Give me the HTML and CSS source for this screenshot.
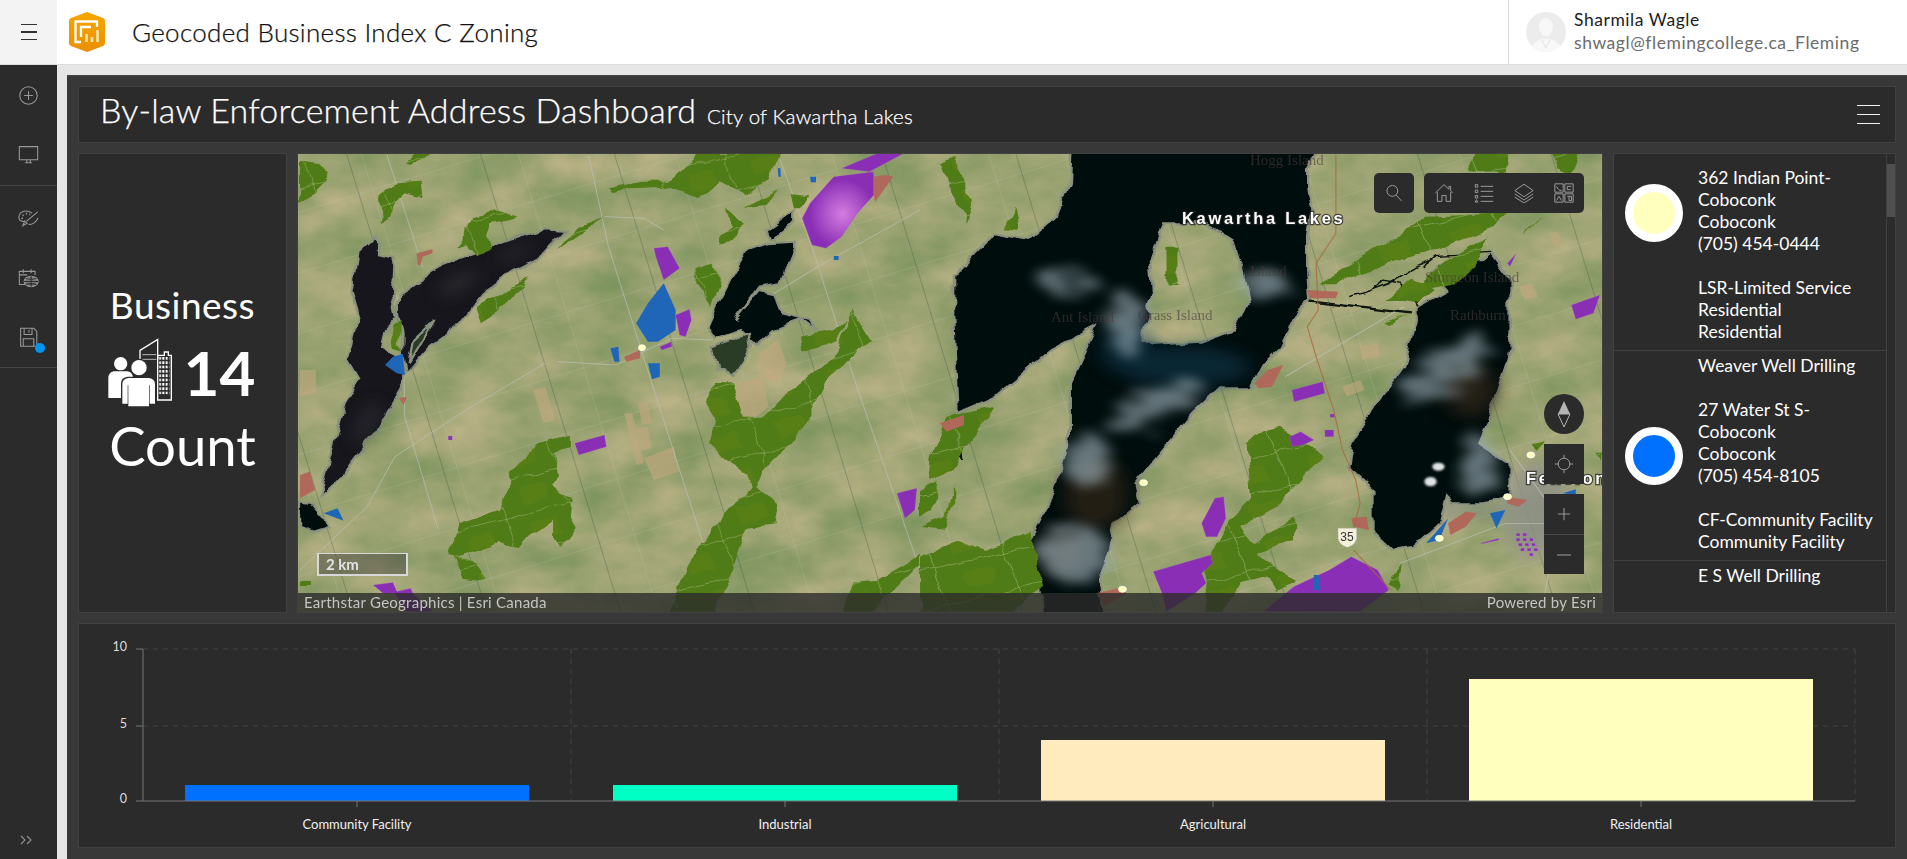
FILE: index.html
```html
<!DOCTYPE html>
<html lang="en">
<head>
<meta charset="utf-8">
<title>Geocoded Business Index C Zoning</title>
<link rel="stylesheet" href="styles.css">
</head>
<body>
<header class="topbar">
  <button class="menu-btn" aria-label="Menu"><span></span><span></span><span></span></button>
  <svg class="logo" viewBox="0 0 36 40">
    <defs><linearGradient id="lg" x1="0" y1="0" x2="0" y2="1"><stop offset="0" stop-color="#f7a600"/><stop offset="1" stop-color="#ea8f00"/></linearGradient></defs>
    <path d="M18 0 L34 6 Q36 7 36 9 V31 Q36 33 34 34 L18 40 L2 34 Q0 33 0 31 V9 Q0 7 2 6 Z" fill="url(#lg)"/>
    <path d="M12 30 H6.500 V9.500 H28 V15" fill="none" stroke="#fff" stroke-width="2.300"/>
    <path d="M12 25 V15 H22" fill="none" stroke="#fff" stroke-width="2.300"/>
    <path d="M17.500 22 v8 M23 25 v5 M28.500 18 v12" fill="none" stroke="#ffe3ad" stroke-width="2.600"/>
  </svg>
  <h1 class="app-title">Geocoded Business Index C Zoning</h1>
  <div class="user">
    <svg class="avatar" viewBox="0 0 40 40">
      <defs><clipPath id="av"><ellipse cx="20" cy="20" rx="20" ry="20"/></clipPath></defs>
      <g clip-path="url(#av)"><rect width="40" height="40" fill="#ececec"/>
      <ellipse cx="20" cy="15" rx="7" ry="9" fill="#f8f8f8"/><path d="M4 40 Q5 30 16 27 H24 Q35 30 36 40 Z" fill="#f8f8f8"/><path d="M16 28 L20 36 L24 28" fill="none" stroke="#e2e2e2"/></g>
    </svg>
    <div class="user-text">
      <div class="user-name">Sharmila Wagle</div>
      <div class="user-mail">shwagl@flemingcollege.ca_Fleming</div>
    </div>
  </div>
</header>

<div class="shell">
  <nav class="sidebar">
    <div class="side-group">
      <svg class="side-icon" viewBox="0 0 24 24"><circle cx="12" cy="12" r="10"/><path d="M12 7v10M7 12h10"/></svg>
      <svg class="side-icon" viewBox="0 0 24 24"><path d="M1.500 3h21v15h-21zM8 21.500h8M10 18v3.500M14 18v3.500"/></svg>
    </div>
    <div class="side-group">
      <svg class="side-icon" viewBox="0 0 24 24"><path d="M16 7C14 5.500 11.500 4.500 9 4.500 4.500 4.500 1 7.500 1 11.500 1 14.500 3 16.500 6 16.500 7 16.500 8 16 8.500 15.500"/><path d="M5 9.500h1.500M9 7.500h1.500M13 8.500h1M4 13h1.500" stroke-width="2"/><path d="M5.500 21.500l2-5 3 2zM9.500 16.500L22.500 5.500M12 20c4 0 8.500-2.500 11-7.500"/></svg>
      <svg class="side-icon" viewBox="0 0 24 24"><path d="M8 20H1.500V5h18v4M6 2.500v4.500M15 2.500v4.500M1.500 9h9"/><ellipse cx="15" cy="16.500" rx="8" ry="6" fill="#7a7a7a"/><path d="M15 10.500v12M7 16.500h16M9 13c3 1 9 1 12 0M9 20c3-1 9-1 12 0" stroke="#2b2b2b"/></svg>
      <span class="save-wrap">
        <svg class="side-icon" viewBox="0 0 24 24"><path d="M3 1.500h15l3.500 3.500v17H3zM7 1.500v7h9v-7M12.500 3.500v3M6 22v-8.500h12V22"/></svg>
        <span class="dirty-dot"></span>
      </span>
    </div>
    <svg class="expand" viewBox="0 0 16 12"><path d="M2 2l4 4-4 4M8 2l4 4-4 4"/></svg>
  </nav>

  <main class="workspace">
    <div class="dashboard">
      <section class="panel title-panel">
        <h2 class="dash-title">By-law Enforcement Address Dashboard</h2>
        <span class="dash-sub">City of Kawartha Lakes</span>
        <button class="dash-menu" aria-label="Dashboard menu"><span></span><span></span><span></span></button>
      </section>

      <div class="middle">
        <section class="panel indicator">
          <div class="ind-top">Business</div>
          <div class="ind-row">
            <svg class="ind-icon" viewBox="148 198 190 207">
              <defs><pattern id="win" x="300" y="255" width="10" height="13" patternUnits="userSpaceOnUse"><rect width="6" height="8" fill="#fff"/></pattern></defs>
              <path d="M243 262V235L296 202V262" fill="none" stroke="#fff" stroke-width="4"/>
              <path d="M250 248H292M250 262H292" stroke="#fff" stroke-width="2"/>
              <path d="M296 250H316V240H328V250H337V384H296Z" fill="none" stroke="#fff" stroke-width="4"/>
              <rect x="301" y="255" width="30" height="112" fill="url(#win)"/>
              <circle cx="185" cy="275" r="20" fill="#fff"/>
              <path d="M148 320Q148 300 165 298H205Q222 300 222 320V378H148Z" fill="#fff"/>
              <circle cx="240" cy="287" r="27" fill="#2b2b2b"/>
              <circle cx="240" cy="287" r="23" fill="#fff"/>
              <path d="M186 403V335Q186 316 206 314H272Q292 316 292 335V403Z" fill="#2b2b2b"/>
              <path d="M190 395V337Q190 320 208 318H270Q288 320 288 337V395H272V340H270V403H208V340H206V395Z" fill="#fff"/>
            </svg>
            <span class="ind-num">14</span>
          </div>
          <div class="ind-bottom">Count</div>
        </section>

        <section class="panel map-panel">
          <svg class="map" viewBox="298 154 1304 458" preserveAspectRatio="none">
            <defs>
              <filter id="terrain" x="0" y="0" width="100%" height="100%" color-interpolation-filters="sRGB">
                <feTurbulence type="fractalNoise" baseFrequency="0.014 0.022" numOctaves="5" seed="11"/>
                <feColorMatrix values="0.34 0 0 0 0.44  0.16 0 0 0 0.56  0.22 0 0 0 0.34  0 0 0 0 1"/>
              </filter>
              <filter id="rough" x="-5%" y="-5%" width="110%" height="110%">
                <feTurbulence type="fractalNoise" baseFrequency="0.018" numOctaves="2" seed="5" result="n"/>
                <feDisplacementMap in="SourceGraphic" in2="n" scale="26" xChannelSelector="R" yChannelSelector="G"/>
              </filter>
              <filter id="blur3"><feGaussianBlur stdDeviation="3"/></filter>
              <filter id="blur9" x="-40%" y="-40%" width="180%" height="180%"><feGaussianBlur stdDeviation="22"/></filter>
              <filter id="cloud" x="-30%" y="-30%" width="160%" height="160%" color-interpolation-filters="sRGB">
                <feTurbulence type="fractalNoise" baseFrequency="0.012 0.035" numOctaves="4" seed="3" result="n"/>
                <feDisplacementMap in="SourceGraphic" in2="n" scale="110"/>
                <feGaussianBlur stdDeviation="16"/>
              </filter>
              <radialGradient id="pglow" cx=".55" cy=".55" r=".45"><stop offset="0" stop-color="#d57ce0"/><stop offset="1" stop-color="#8a2fb5"/></radialGradient>
              <pattern id="parcelA" width="150" height="58" patternUnits="userSpaceOnUse" patternTransform="rotate(-17)"><path d="M0 0V58M0 0H150" fill="none" stroke="#c2cdc2" stroke-width="1"/></pattern>
              <pattern id="parcelB" width="128" height="500" patternUnits="userSpaceOnUse" patternTransform="rotate(-17) translate(30 0)"><path d="M0 0V500" fill="none" stroke="#2c4a40" stroke-width="1.200"/></pattern>
              <pattern id="fieldGreen" width="170" height="110" patternUnits="userSpaceOnUse" patternTransform="rotate(-17)"><rect width="170" height="110" fill="#4f7b12"/><rect x="60" y="30" width="70" height="50" fill="#587f16"/><path d="M0 0V110M0 0H170" fill="none" stroke="#a9bb8b" stroke-width="2.500"/></pattern>
            </defs>

            <rect x="298" y="154" width="1304" height="458" filter="url(#terrain)"/>
            <rect x="298" y="154" width="1304" height="458" fill="url(#parcelA)" opacity=".35"/>
            <rect x="298" y="154" width="1304" height="458" fill="url(#parcelB)" opacity=".5"/>

            <!-- Left half, traced in crop coordinates -->
            <g transform="translate(300 150) scale(.3954 .3333)">
              <g class="tan">
                <path d="M820 790l20 0 30 150-20 5zM855 760l25-5 10 65-25 5zM850 835l30-5 8 65-23 5zM870 925l75-35 15 75-65 25zM1160 610l50-40 20 70-20 60-50-20zM1100 700l70-20 15 90-55 50-30-60zM590 720l30-10 25 100-30 10zM0 660l40 0 0 70-40 10z"/>
              </g>
              <g class="roads-wide">
                <path d="M220 15L310 350M730 15L780 290 890 700 1060 1330M1210 15L1300 310 1400 680 1568 1260M620 640L420 780 240 920 170 1070 0 1260M650 635L800 645 940 565 1040 570 1200 430 1310 350 1568 180M770 200L870 205 920 240M240 420L260 500 265 800 350 1140"/>
              </g>

              <g class="shore" filter="url(#rough)">
                <path class="lake-l" d="M195 255L145 310 130 420 150 500 120 630 150 690 115 760 85 880 50 1040 90 1000 140 920 200 830 255 720 270 670 250 620 205 590 215 540 245 500 235 440 240 320 195 310Z"/>
                <path class="lake-l" d="M250 440L310 395 330 365 360 345 440 310 530 270 620 235 670 240 610 320 530 370 470 420 400 530 330 590 270 670 260 610 262 550 250 490Z"/>
                <path class="lake-g" d="M275 640L285 570 340 510 300 590Z"/>
                <path class="lake-d" d="M1250 275L1180 280 1130 300 1090 380 1060 450 1030 530 1050 565 1110 540 1150 590 1200 540 1270 510 1310 545 1290 510 1220 490 1200 430 1160 420 1100 510 1160 410 1215 400 1250 300Z"/>
                <path class="lake-d" d="M1250 180L1180 240 1190 270 1250 210Z"/>
                <path class="lake-g" d="M1040 590L1135 555 1140 600 1095 680 1055 660Z"/>
                <path class="lake-d" d="M0 1055L30 1060 60 1100 70 1130 30 1145 0 1130Z"/>
              </g>
              <g class="lake-sheen" filter="url(#blur9)">
                <ellipse cx="400" cy="400" rx="60" ry="22" transform="rotate(-35 400 400)"/>
                <ellipse cx="540" cy="310" rx="50" ry="14" transform="rotate(-25 540 310)"/>
                <ellipse cx="170" cy="820" rx="20" ry="70" transform="rotate(20 170 820)"/>
              </g>

              <g class="grn" fill="url(#fieldGreen)" filter="url(#rough)">
                <path d="M0 30L50 40 70 70 40 130 0 155Z"/>
                <path d="M200 140L240 100 310 95 315 145 260 130 220 200 205 220Z"/>
                <path d="M265 40L300 5 340 5 280 45Z"/>
                <path d="M400 290L440 200 490 180 555 200 480 220 470 260 480 300 450 315 420 280Z"/>
                <path d="M445 470L510 430 580 375 520 470 460 520Z"/>
                <path d="M650 300L700 235 770 205 690 270Z"/>
                <path d="M780 115L860 95 930 95 1000 30 1010 5 1210 5 1180 90 1130 135 1060 100 1000 145 930 110 830 115 790 130Z"/>
                <path d="M1125 170L1210 120 1180 165 1130 170Z"/>
                <path d="M1240 130L1285 135 1270 175 1250 175Z"/>
                <path d="M1075 170L1125 220 1100 260 1060 285 1060 260 1090 235Z"/>
                <path d="M1000 350L1040 335 1065 385 1040 470 1000 400Z"/>
                <path d="M230 530L260 510 250 580 265 600 240 590Z"/>
                <path d="M1050 700L1095 700 1120 800 1180 800 1260 700 1350 620 1380 530 1395 480 1445 575 1340 680 1290 800 1240 880 1190 940 1150 1010 1210 1060 1200 1120 1130 1130 1050 1390 930 1390 1000 1200 1080 1090 1140 1010 1130 970 1070 920 1035 880 1050 810 1030 750Z"/>
                <path d="M1265 560L1350 540 1380 510 1360 570 1270 605Z"/>
                <path d="M600 880L680 855 680 890 640 910 650 980 640 1010 685 1040 680 1100 695 1130 660 1190 640 1160 640 1110 580 1160 555 1195 500 1170 480 1190 390 1220 410 1280 470 1290 440 1240 380 1215 400 1120 500 1080 540 990 530 970 570 920Z"/>
                <path d="M1370 1390L1400 1295 1460 1290 1568 1215 1568 1240 1440 1390Z"/>
                <path d="M0 1290L30 1290 30 1305 0 1305Z"/>
              </g>
              <g class="purp">
                <path d="M1370 55L1470 5 1535 5 1440 65Z"/>
                <path fill="url(#pglow)" d="M1290 160L1350 80 1450 65 1455 130 1410 190 1370 260 1330 295 1295 285 1270 205Z"/>
                <path d="M895 295L930 290 960 355 920 390 900 320Z"/>
                <path d="M950 495L985 478 990 510 975 560 960 555Z"/>
                <path d="M695 880L770 855 775 890 705 915Z"/>
                <path d="M1510 1030L1560 1015 1555 1080 1530 1105Z"/>
                <path d="M910 590L940 575 940 590 915 600Z"/>
                <path d="M185 1305L235 1298 245 1325 280 1315 285 1330 335 1385 270 1385 240 1330 210 1330Z"/>
                <path d="M375 858H385V870H375Z"/>
              </g>
              <g class="blu">
                <path d="M920 400L950 480 950 540 905 575 880 575 850 520 880 460Z"/>
                <path d="M785 595L805 590 808 635 795 635Z"/>
                <path d="M880 640L910 640 910 680 890 688Z"/>
                <path d="M215 645L235 620 260 612 265 675 245 670Z"/>
                <path d="M60 1090L95 1075 110 1112Z"/>
                <path d="M1290 80H1305V97H1292ZM1208 55L1215 55 1216 80 1210 80ZM1350 318H1362V330H1350Z"/>
              </g>
              <g class="sal">
                <path d="M295 310L335 298 335 310 310 320 305 345 298 345Z"/>
                <path d="M0 975L25 965 38 1020 0 1045Z"/>
                <path d="M1450 80L1480 75 1500 80 1455 155 1450 130Z"/>
                <path d="M250 745L270 740 262 765ZM820 620L860 600 860 625 825 635Z"/>
              </g>
              <circle class="pt" cx="865" cy="593" r="9"/>
            </g>

            <!-- Right half, traced in crop coordinates -->
            <g transform="translate(920 150) scale(.4401 .3333)">
              <g class="tan">
                <path d="M1000 590l40-10 5 40-40 10zM1360 410l30-10 15 40-30 10zM960 710l40-20 10 30-40 20zM1430 250l20-5 10 40-20 5z"/>
              </g>
              <g class="urban" filter="url(#blur9)">
                <ellipse cx="1400" cy="1080" rx="75" ry="150"/>
                <ellipse cx="1240" cy="1080" rx="90" ry="22"/>
              </g>
              <g class="roads-wide">
                <path d="M830 680L1100 470M1340 900L1450 1100 1420 1330M1090 1240L1330 1120 1420 1120"/>
              </g>
              <g class="shore" filter="url(#rough)">
                <path class="lake-d" fill-rule="evenodd" d="M345 -30L920 -30 880 60 880 110 890 180 880 260 880 360 885 450 860 480 820 590 780 640 750 715 680 715 620 790 520 950 490 1000 500 1060 440 1120 430 1200 410 1260 420 1400 280 1400 270 1280 240 1190 300 1040 340 860 340 700 400 530 300 600 170 740 120 770 85 790 75 500 75 380 170 250 250 270 310 200 340 100ZM555 220L650 220 710 270 730 350 745 440 710 540 640 575 530 585 500 570 520 500 530 430 525 330Z"/>
                <path class="lake-d" d="M1300 310L1340 380 1340 600 1320 700 1290 820 1270 880 1340 940 1340 1040 1280 1060 1210 1060 1195 1040 1180 1120 1120 1190 1070 1200 1030 1150 1030 1020 970 950 980 880 1050 740 1100 650 1120 540 1130 500 1130 470 1200 420 1160 360 1190 340 1280 330Z"/>
                <path class="river" d="M885 455L1120 490M90 840L95 930"/>
                <path class="river thin" d="M980 440L1060 400 1130 345 1160 330M1020 420L1050 390 1090 400 1130 470M1140 350L1170 320 1300 310"/>
              </g>
              <g class="blue-water" filter="url(#blur9)">
                <ellipse cx="600" cy="650" rx="150" ry="60"/>
                <ellipse cx="470" cy="600" rx="60" ry="70"/>
              </g>
              <g class="brown" filter="url(#blur9)">
                <ellipse cx="400" cy="1030" rx="70" ry="110"/>
                <ellipse cx="1250" cy="720" rx="60" ry="80"/>
                <ellipse cx="330" cy="1200" rx="50" ry="70"/>
              </g>
              <g class="cloud" filter="url(#cloud)">
                <ellipse cx="470" cy="520" rx="40" ry="100"/>
                <ellipse cx="340" cy="400" rx="70" ry="30"/>
                <ellipse cx="780" cy="400" rx="55" ry="45"/>
                <ellipse cx="530" cy="770" rx="130" ry="40" transform="rotate(-35 530 770)"/>
                <ellipse cx="380" cy="930" rx="55" ry="80"/>
                <ellipse cx="350" cy="1210" rx="85" ry="80"/>
                <ellipse cx="1190" cy="660" rx="140" ry="50" transform="rotate(-50 1190 660)"/>
                <ellipse cx="1265" cy="950" rx="40" ry="95"/>
              </g>
              <g class="white-cloud" filter="url(#blur3)">
                <ellipse cx="1178" cy="950" rx="14" ry="12"/><ellipse cx="1160" cy="995" rx="14" ry="14"/>
              </g>
              <g class="grn" fill="url(#fieldGreen)" filter="url(#rough)">
                <path d="M45 40L85 20 90 80 120 150 105 220 85 140 60 100Z"/>
                <path d="M190 235L215 170 225 240Z"/>
                <path d="M560 290H585V405H560Z"/>
                <path d="M905 400L1060 280 1150 200 1340 190 1300 230 1150 310 1060 340 950 400Z"/>
                <path d="M1260 5L1340 5 1330 70 1240 60ZM1430 5L1500 5 1480 70 1445 50Z"/>
                <path d="M1150 370L1290 260 1260 350 1220 400 1140 420Z"/>
                <path d="M1060 450L1120 380 1170 420 1130 460 1100 450Z"/>
                <path d="M1050 520L1120 490 1080 510 1060 525Z"/>
                <path d="M30 900L60 800 170 770 100 900 75 960 20 985Z"/>
                <path d="M0 1020L40 990 30 1080 0 1100Z"/>
                <path d="M0 1130L60 1100 80 1000 80 1060 50 1140Z"/>
                <path d="M0 1220L90 1170 150 1200 250 1140 280 1310 210 1390H0Z"/>
                <path d="M740 880L790 840 820 830 890 890 915 920 860 1000 800 1080 730 1130 760 1180 850 1100 850 1170 760 1210 850 1290 810 1320 790 1280 730 1300 690 1390 640 1390 660 1210 690 1130 750 1050Z"/>
                <path d="M1060 1300L1090 1240 1080 1330Z"/>
                <path d="M1370 260L1420 190 1380 240ZM1390 880L1420 870 1400 910ZM1530 905H1550V930Z"/>
              </g>
              <g class="purp">
                <path d="M845 720L915 695 920 730 850 755Z"/>
                <path d="M840 860L865 845 895 870 870 885 845 890Z"/>
                <path d="M920 840H940V860H920ZM932 792H942V802H932Z"/>
                <path d="M1480 465L1545 435 1530 490 1490 508Z"/>
                <path d="M670 1045L690 1040 695 1105 675 1160 650 1160 640 1120Z"/>
                <path d="M530 1265L660 1215 665 1240 640 1270 650 1300 625 1330 560 1385 550 1330Z"/>
                <path d="M780 1385L850 1310 930 1260 980 1220 1040 1260 1065 1320 1000 1385Z"/>
                <path d="M1335 340L1355 310 1340 350ZM1275 1180L1315 1165 1315 1170 1275 1182Z"/>
                <path class="dots" d="M1355 1150h8v8h-8zM1370 1150h8v8h-8zM1355 1165h8v8h-8zM1370 1165h8v8h-8zM1385 1165h8v8h-8zM1360 1180h8v8h-8zM1375 1180h8v8h-8zM1390 1180h8v8h-8zM1365 1195h8v8h-8zM1380 1195h8v8h-8zM1395 1195h8v8h-8zM1385 1210h8v8h-8z"/>
              </g>
              <g class="sal">
                <path d="M45 820L100 795 100 825 60 845Z"/>
                <path d="M760 700L790 660 825 645 800 710 770 715Z"/>
                <path d="M1200 1120L1240 1085 1265 1090 1240 1130 1205 1155Z"/>
                <path d="M980 1105L1015 1100 1020 1140 985 1130Z"/>
                <path d="M400 1330L450 1315 470 1330 420 1370Z"/>
                <path d="M880 420L950 425 945 445 885 445ZM1330 1040L1380 1050 1360 1070 1335 1060Z"/>
              </g>
              <g class="blu">
                <path d="M1295 1090L1330 1080 1310 1135Z"/>
                <path d="M1150 1180L1200 1105 1180 1170Z"/>
                <path d="M1460 1030L1490 1018 1490 1035ZM895 1275L905 1275 910 1320 895 1320Z"/>
              </g>
              <path class="hwy" d="M945 15V250L900 340 905 480 880 530 900 620 940 780 960 900 990 990 1000 1060 980 1160M985 1200L1070 1320"/>
              <path class="shield" d="M950 1135H992V1165Q990 1185 971 1192 952 1185 950 1165Z"/>
              <circle class="pt" cx="508" cy="998" r="9"/>
              <circle class="pt" cx="460" cy="1318" r="9"/>
              <circle class="pt" cx="1180" cy="1165" r="9"/>
              <circle class="pt" cx="1335" cy="1040" r="9"/>
              <circle class="pt" cx="1388" cy="915" r="9"/>
            </g>

            <text class="lbl-faint" x="1051" y="322">Ant Island</text>
            <text class="lbl-faint" x="1138" y="320">Grass Island</text>
            <text class="lbl-faint" x="1250" y="276">Island</text>
            <text class="lbl-faint" x="1425" y="282">Sturgeon Island</text>
            <text class="lbl-faint" x="1450" y="320">Rathburn</text>
            <text class="lbl-faint" x="1250" y="165">Hogg Island</text>
            <text class="shield-txt" x="1347" y="541">35</text>
            <text class="lbl-main" x="1182" y="224">Kawartha Lakes</text>
            <text class="lbl-main" x="1526" y="484">Fenelon</text>
          </svg>

          <div class="scalebar">2 km</div>
          <div class="attrib"><span>Earthstar Geographics | Esri Canada</span><span>Powered by Esri</span></div>

          <div class="map-tools">
            <button class="tool-box" aria-label="Search"><svg class="tool" viewBox="0 0 24 24"><circle cx="10" cy="9.500" r="6.500"/><path d="M14.500 14.500L21 21.500"/></svg></button>
            <div class="tool-box tool-group">
              <svg class="tool" viewBox="0 0 24 24"><path d="M1.500 12L12 2l6 5.500V4h2v5.500l2.500 2.500M4 11v11h5.500v-7h5v7H20V11"/></svg>
              <svg class="tool" viewBox="0 0 24 24"><path d="M8 4h15M8 10h15M8 16h15M8 22h15M1.500 2h3v3h-3zM1.500 8.500h3v3h-3zM1.500 15h3v3h-3zM1.500 23L3 20l1.500 3z"/></svg>
              <svg class="tool" viewBox="0 0 24 24"><path d="M12 1.500L23 9 12 16.500 1 9zM1 13l11 7.500L23 13M1 17l11 7 11-7"/></svg>
              <svg class="tool" viewBox="0 0 24 24"><path d="M1 1h10v10H1zM13 1h10v10H13zM1 13h10v10H1zM13 13h10v10H13zM3 4c1 3 3 5 6 5M16 4h5M16 4v4h4M3 21l3-5 3 5M16 16h5v5h-3v-5"/></svg>
            </div>
          </div>

          <div class="map-nav">
            <button class="compass" aria-label="Compass"><svg viewBox="0 0 40 40"><path d="M20 7L26 20H14Z" fill="#b5b5b5"/><path d="M14 20H26L20 33Z" fill="none" stroke="#b5b5b5"/></svg></button>
            <button class="nav-btn" aria-label="Locate"><svg class="tool" viewBox="0 0 24 24"><circle cx="12" cy="12" r="7"/><path d="M12 1v4M12 19v4M1 12h4M19 12h4"/></svg></button>
            <div class="zoom-box">
              <button class="nav-btn" aria-label="Zoom in"><svg class="tool small" viewBox="0 0 16 16"><path d="M8 1v14M1 8h14"/></svg></button>
              <button class="nav-btn" aria-label="Zoom out"><svg class="tool small" viewBox="0 0 16 16"><path d="M0 8h16"/></svg></button>
            </div>
          </div>
        </section>

        <section class="panel list-panel">
          <div class="list">
            <article class="item item-first">
              <span class="dot dot-res"></span>
              <p>362 Indian Point-<br>Coboconk<br>Coboconk<br>(705) 454-0444<br><br>LSR-Limited Service Residential<br>Residential</p>
            </article>
            <article class="item item-mid">
              <span class="dot dot-com"></span>
              <p>Weaver Well Drilling<br><br>27 Water St S-<br>Coboconk<br>Coboconk<br>(705) 454-8105<br><br>CF-Community Facility<br>Community Facility</p>
            </article>
            <article class="item">
              <span class="dot-gap"></span>
              <p>E S Well Drilling</p>
            </article>
          </div>
          <div class="scroll"><div class="thumb"></div></div>
        </section>
      </div>

      <section class="panel chart-panel">
        <svg class="chart" viewBox="79 624 1816 223">
          <g class="grid">
            <path d="M143 649H1855M143 726H1855M571 649V801M999 649V801M1427 649V801M1855 649V801"/>
          </g>
          <rect x="185" y="785" width="344" height="16" fill="#0070ff"/>
          <rect x="613" y="785" width="344" height="16" fill="#00ffc5"/>
          <rect x="1041" y="740" width="344" height="61" fill="#ffebbe"/>
          <rect x="1469" y="679" width="344" height="122" fill="#ffffbe"/>
          <g class="axis">
            <path d="M143 649V801M136 649H143M136 726H143M136 801H1855M357 801v6M785 801v6M1213 801v6M1641 801v6"/>
          </g>
          <g class="y-lab">
            <text x="127" y="651">10</text>
            <text x="127" y="728">5</text>
            <text x="127" y="803">0</text>
          </g>
          <g class="x-lab">
            <text x="357" y="829">Community Facility</text>
            <text x="785" y="829">Industrial</text>
            <text x="1213" y="829">Agricultural</text>
            <text x="1641" y="829">Residential</text>
          </g>
        </svg>
      </section>
    </div>
  </main>
</div>
</body>
</html>
```

FILE: styles.css
```css
* { box-sizing: border-box; }
html, body { margin: 0; height: 100%; }
body {
  width: 1907px;
  height: 859px;
  overflow: hidden;
  display: flex;
  flex-direction: column;
  font-family: Lato, "Open Sans", "Liberation Sans", sans-serif;
  background: #e6e6e6;
}
button { padding: 0; border: 0; background: none; }

/* top bar */
.topbar {
  height: 65px;
  flex: none;
  display: flex;
  align-items: center;
  background: #fff;
  border-bottom: 1px solid #dcdcdc;
}
.menu-btn {
  width: 57px;
  height: 64px;
  display: flex;
  flex-direction: column;
  align-items: center;
  justify-content: center;
  gap: 6px;
  background: #f3f3f3;
}
.menu-btn span { width: 16px; height: 1.500px; background: #333; }
.logo { width: 36px; height: 40px; margin-left: 12px; }
.app-title {
  margin: 0 0 0 27px;
  font-size: 26px;
  font-weight: 300;
  color: #111;
  letter-spacing: .3px;
  -webkit-text-stroke: .25px #111;
}
.user {
  margin-left: auto;
  width: 399px;
  height: 64px;
  display: flex;
  align-items: center;
  padding-left: 17px;
  border-left: 1px solid #dcdcdc;
}
.avatar { width: 40px; height: 40px; }
.user-text { margin-left: 8px; }
.user-name { font-size: 17.500px; letter-spacing: .55px; line-height: 22px; color: #1c1c1c; }
.user-mail { font-size: 17.500px; letter-spacing: .55px; line-height: 24px; color: #6b6b6b; }

/* shell */
.shell { flex: 1; display: flex; min-height: 0; }
.sidebar {
  position: relative;
  width: 57px;
  flex: none;
  background: #2b2b2b;
}
.side-group {
  display: flex;
  flex-direction: column;
  align-items: center;
  padding: 20px 0 20px;
  gap: 38px;
  border-bottom: 1px solid #444;
}
.side-group:nth-child(2) { padding: 21px 0 19px; gap: 39px; }
.side-icon {
  width: 21px;
  height: 21px;
  display: block;
  fill: none;
  stroke: #999;
  stroke-width: 1.200;
}
.save-wrap { position: relative; display: block; }
.dirty-dot {
  position: absolute;
  right: -6px;
  bottom: -5px;
  width: 10px;
  height: 10px;
  border-radius: 50%;
  background: #0095f2;
}
.expand {
  position: absolute;
  left: 19px;
  bottom: 13px;
  width: 16px;
  height: 12px;
  fill: none;
  stroke: #8d8d8d;
  stroke-width: 1.200;
}

/* dashboard */
.workspace { flex: 1; min-width: 0; padding: 10px 0 0 10px; }
.dashboard {
  height: 784px;
  display: flex;
  flex-direction: column;
  gap: 10px;
  padding: 11px;
  background: #383838;
  border-top: 1px solid #444;
  color: #fff;
}
.panel { background: #2b2b2b; border: 1px solid #414141; }
.title-panel {
  height: 57px;
  flex: none;
  display: flex;
  align-items: center;
  margin-top: -1px;
  padding: 0 15px 10px 21px;
}
.dash-title {
  margin: 0;
  font-size: 34px;
  font-weight: 300;
  letter-spacing: .18px;
  -webkit-text-stroke: .25px #fff;
}
.dash-sub {
  margin: 12px 0 0 11px;
  font-size: 20.500px;
  font-weight: 300;
  letter-spacing: .15px;
  -webkit-text-stroke: .25px #fff;
}
.dash-menu {
  margin: 10px 0 0 auto;
  width: 23px;
  display: flex;
  flex-direction: column;
  gap: 7.500px;
}
.dash-menu span { height: 1.500px; background: #f2f2f2; }

.middle {
  height: 460px;
  flex: none;
  display: grid;
  grid-template-columns: 209px 1306px 283px;
  gap: 10px;
}

/* indicator */
.indicator {
  display: flex;
  flex-direction: column;
  align-items: center;
  padding-top: 128px;
}
.ind-top { font-size: 37px; letter-spacing: .5px; line-height: 46px; }
.ind-row { display: flex; align-items: center; gap: 12px; margin: 8px 2px 0 0; height: 72px; }
.ind-icon { width: 64px; height: 69px; }
.ind-num { font-size: 62px; font-weight: 700; line-height: 70px; }
.ind-bottom { font-size: 54.500px; line-height: 66px; margin-top: 4px; font-weight: 400; }

/* map */
.map-panel { position: relative; overflow: hidden; }
.map { display: block; width: 1304px; height: 458px; }
.tan { fill: #c3a97e; opacity: .6; }
.urban { fill: #8c8f88; opacity: .8; }
.roads-wide { fill: none; stroke: #bcc3b8; stroke-width: 2.400; opacity: .75; }
.shore { stroke: #8a917f; stroke-width: 6; }
.lake-l { fill: #14171a; }
.lake-d { fill: #060d10; }
.lake-g { fill: #2b3a26; }
.lake-sheen { fill: #3d3e42; opacity: .5; }
.blue-water { fill: #103045; opacity: .7; }
.river { fill: none; stroke: #0a1210; stroke-width: 7; }
.river.thin { stroke-width: 4; }
.brown { fill: #2a2214; opacity: .85; }
.cloud { fill: #a2b6c0; opacity: .62; }
.white-cloud { fill: #dfe3e3; }
.purp { fill: #8a2fb5; stroke: #b377c9; stroke-width: 1; stroke-opacity: .6; }
.blu { fill: #1f66b8; }
.sal { fill: #b0685a; }
.hwy { fill: none; stroke: #a8683a; stroke-width: 2.500; opacity: .85; }
.shield { fill: #f4f0dc; stroke: #bbb; stroke-width: 1; }
.pt { fill: #ffffbe; stroke: #fff; stroke-width: 2; }
.lbl-faint { font-family: "Liberation Serif", serif; font-size: 15px; fill: #4a3a3a; opacity: .6; }
.lbl-main {
  font-family: "Liberation Sans", sans-serif;
  font-weight: 700;
  font-size: 16.500px;
  letter-spacing: 2.700px;
  fill: #fff;
  stroke: #222;
  stroke-width: 2.500px;
  stroke-opacity: .75;
  paint-order: stroke;
}
.shield-txt { font-family: "Liberation Sans", sans-serif; font-size: 12px; fill: #333; text-anchor: middle; }
.scalebar {
  position: absolute;
  left: 19px;
  top: 399px;
  width: 91px;
  height: 23px;
  padding-left: 7px;
  font-size: 15px;
  font-weight: 700;
  line-height: 20px;
  color: #e4e4e4;
  background: rgba(60, 60, 60, .45);
  border: 2px solid #d8d8d8;
  border-top-width: 1px;
}
.attrib {
  position: absolute;
  left: 0;
  right: 0;
  bottom: 0;
  height: 19px;
  display: flex;
  justify-content: space-between;
  padding: 0 6px;
  font-size: 15px;
  letter-spacing: .25px;
  line-height: 18px;
  color: #c4c4c4;
  background: rgba(43, 43, 43, .8);
}
.map-tools {
  position: absolute;
  top: 19px;
  right: 18px;
  display: flex;
  gap: 10px;
}
.tool-box {
  height: 40px;
  width: 40px;
  display: flex;
  align-items: center;
  justify-content: center;
  background: #2b2b2b;
  border-radius: 5px;
}
.tool-group { width: 160px; justify-content: space-around; }
.tool {
  width: 20px;
  height: 20px;
  fill: none;
  stroke: #999;
  stroke-width: 1.200;
  display: block;
}
.tool.small { width: 14px; height: 14px; }
.map-nav {
  position: absolute;
  top: 240px;
  right: 18px;
  width: 40px;
  display: flex;
  flex-direction: column;
  gap: 10px;
}
.compass { width: 40px; height: 40px; border-radius: 50%; background: #2b2b2b; display: block; }
.compass svg { display: block; }
.nav-btn {
  width: 40px;
  height: 40px;
  display: flex;
  align-items: center;
  justify-content: center;
  background: #2b2b2b;
}
.zoom-box .nav-btn + .nav-btn { border-top: 1px solid #484848; }

/* list */
.list-panel { display: flex; overflow: hidden; }
.list { width: 273px; flex: none; border-right: 1px solid #414141; overflow: hidden; }
.item {
  display: flex;
  align-items: center;
  padding: 4px 4px 7px 11px;
  border-bottom: 1px solid #414141;
}
.item:last-child { border-bottom: 0; }
.item-first { align-items: flex-start; padding-top: 13px; }
.item-first .dot { margin-top: 17px; }
.item-mid .dot { margin-top: 4px; }
.item p {
  margin: 0 0 0 15px;
  font-size: 17.500px;
  line-height: 22px;
  color: #fff;
}
.dot {
  width: 58px;
  height: 58px;
  flex: none;
  border-radius: 50%;
  border: 8px solid #fff;
}
.dot-gap { width: 58px; flex: none; }
.dot-res { background: #ffffbe; }
.dot-com { background: #0070ff; }
.scroll { flex: 1; padding-top: 10px; }
.thumb { height: 53px; background: #4f4f4f; }

/* chart */
.chart-panel { height: 225px; flex: none; }
.chart { display: block; width: 1816px; height: 223px; }
.grid path { fill: none; stroke: #444; stroke-dasharray: 5 5; }
.axis path { fill: none; stroke: #777; }
.y-lab text { font-size: 12.500px; fill: #ddd; text-anchor: end; }
.x-lab text { font-size: 13px; fill: #f0f0f0; text-anchor: middle; }
```
